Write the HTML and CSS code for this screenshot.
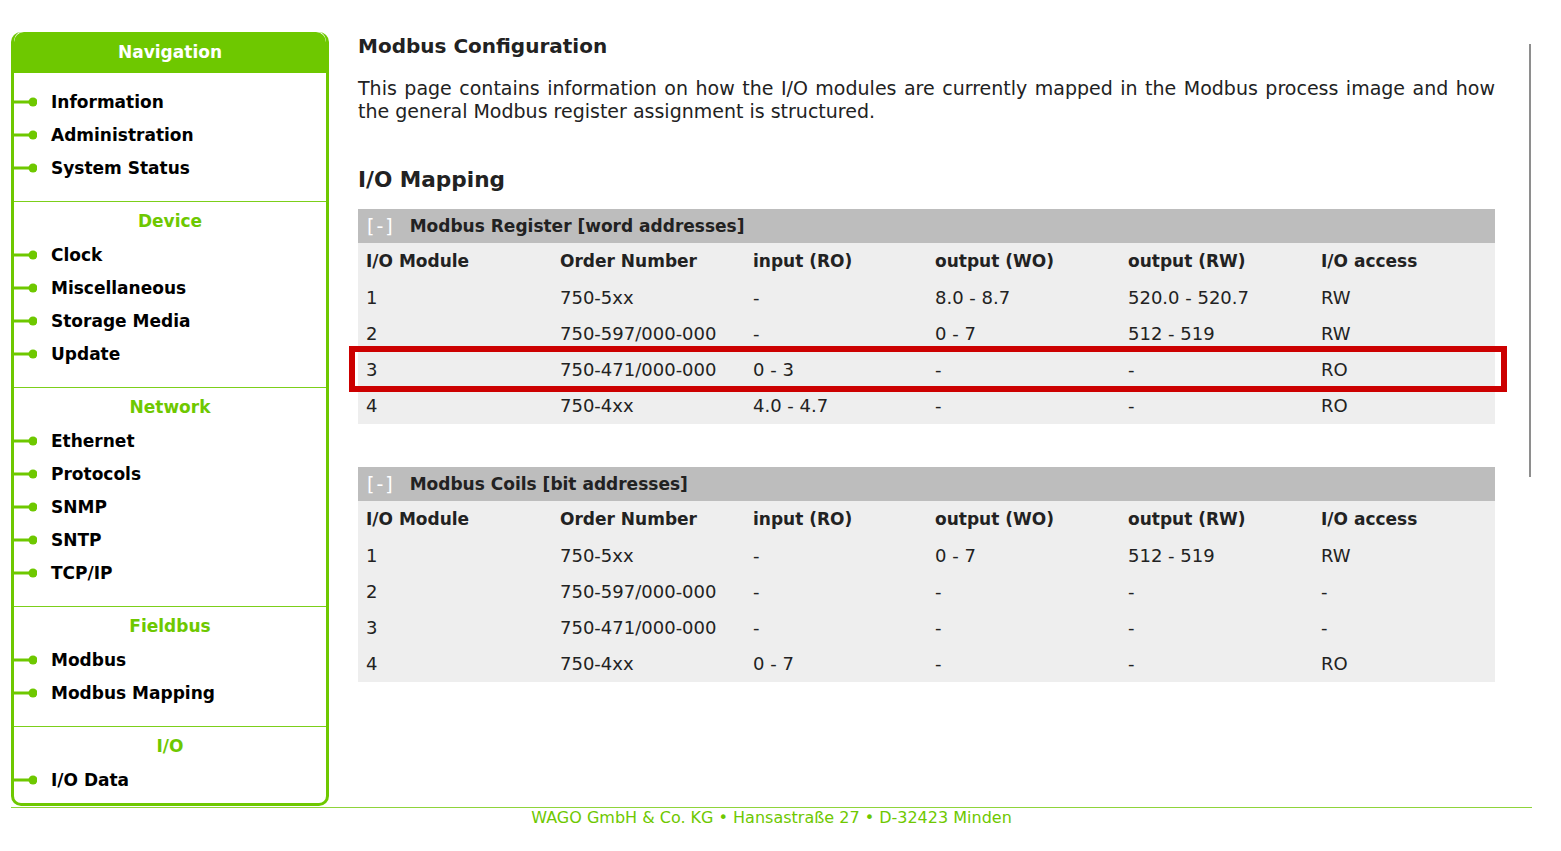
FILE: index.html
```html
<!DOCTYPE html>
<html lang="en">
<head>
<meta charset="utf-8">
<title>Modbus Configuration</title>
<link rel="stylesheet" href="styles.css">
</head>
<body>
<div class="page">
  <nav class="nav">
    <div class="nav-head">Navigation</div>
    <div class="nav-sec nav-first">
      <a class="nav-item"><svg class="bullet" width="23" height="10" viewBox="0 0 23 10"><line x1="0" y1="5" x2="19" y2="5"/><circle cx="19" cy="5" r="4.5"/></svg>Information</a>
      <a class="nav-item"><svg class="bullet" width="23" height="10" viewBox="0 0 23 10"><line x1="0" y1="5" x2="19" y2="5"/><circle cx="19" cy="5" r="4.5"/></svg>Administration</a>
      <a class="nav-item"><svg class="bullet" width="23" height="10" viewBox="0 0 23 10"><line x1="0" y1="5" x2="19" y2="5"/><circle cx="19" cy="5" r="4.5"/></svg>System Status</a>
    </div>
    <div class="nav-sec">
      <div class="nav-title">Device</div>
      <a class="nav-item"><svg class="bullet" width="23" height="10" viewBox="0 0 23 10"><line x1="0" y1="5" x2="19" y2="5"/><circle cx="19" cy="5" r="4.5"/></svg>Clock</a>
      <a class="nav-item"><svg class="bullet" width="23" height="10" viewBox="0 0 23 10"><line x1="0" y1="5" x2="19" y2="5"/><circle cx="19" cy="5" r="4.5"/></svg>Miscellaneous</a>
      <a class="nav-item"><svg class="bullet" width="23" height="10" viewBox="0 0 23 10"><line x1="0" y1="5" x2="19" y2="5"/><circle cx="19" cy="5" r="4.5"/></svg>Storage Media</a>
      <a class="nav-item"><svg class="bullet" width="23" height="10" viewBox="0 0 23 10"><line x1="0" y1="5" x2="19" y2="5"/><circle cx="19" cy="5" r="4.5"/></svg>Update</a>
    </div>
    <div class="nav-sec">
      <div class="nav-title">Network</div>
      <a class="nav-item"><svg class="bullet" width="23" height="10" viewBox="0 0 23 10"><line x1="0" y1="5" x2="19" y2="5"/><circle cx="19" cy="5" r="4.5"/></svg>Ethernet</a>
      <a class="nav-item"><svg class="bullet" width="23" height="10" viewBox="0 0 23 10"><line x1="0" y1="5" x2="19" y2="5"/><circle cx="19" cy="5" r="4.5"/></svg>Protocols</a>
      <a class="nav-item"><svg class="bullet" width="23" height="10" viewBox="0 0 23 10"><line x1="0" y1="5" x2="19" y2="5"/><circle cx="19" cy="5" r="4.5"/></svg>SNMP</a>
      <a class="nav-item"><svg class="bullet" width="23" height="10" viewBox="0 0 23 10"><line x1="0" y1="5" x2="19" y2="5"/><circle cx="19" cy="5" r="4.5"/></svg>SNTP</a>
      <a class="nav-item"><svg class="bullet" width="23" height="10" viewBox="0 0 23 10"><line x1="0" y1="5" x2="19" y2="5"/><circle cx="19" cy="5" r="4.5"/></svg>TCP/IP</a>
    </div>
    <div class="nav-sec">
      <div class="nav-title">Fieldbus</div>
      <a class="nav-item"><svg class="bullet" width="23" height="10" viewBox="0 0 23 10"><line x1="0" y1="5" x2="19" y2="5"/><circle cx="19" cy="5" r="4.5"/></svg>Modbus</a>
      <a class="nav-item"><svg class="bullet" width="23" height="10" viewBox="0 0 23 10"><line x1="0" y1="5" x2="19" y2="5"/><circle cx="19" cy="5" r="4.5"/></svg>Modbus Mapping</a>
    </div>
    <div class="nav-sec nav-last">
      <div class="nav-title">I/O</div>
      <a class="nav-item"><svg class="bullet" width="23" height="10" viewBox="0 0 23 10"><line x1="0" y1="5" x2="19" y2="5"/><circle cx="19" cy="5" r="4.5"/></svg>I/O Data</a>
    </div>
  </nav>

  <main class="main">
    <h1 class="title">Modbus Configuration</h1>
    <p class="intro">This page contains information on how the I/O modules are currently mapped in the Modbus process image and how the general Modbus register assignment is structured.</p>
    <h2 class="subtitle">I/O Mapping</h2>

    <div class="map">
      <div class="band"><span class="toggle">[-]</span><span class="band-title">Modbus Register [word addresses]</span></div>
      <table class="grid">
        <colgroup><col class="c1"><col class="c2"><col class="c3"><col class="c4"><col class="c5"><col class="c6"></colgroup>
        <tr><th>I/O Module</th><th>Order Number</th><th>input (RO)</th><th>output (WO)</th><th>output (RW)</th><th>I/O access</th></tr>
        <tr><td>1</td><td>750-5xx</td><td>-</td><td>8.0 - 8.7</td><td>520.0 - 520.7</td><td>RW</td></tr>
        <tr><td>2</td><td>750-597/000-000</td><td>-</td><td>0 - 7</td><td>512 - 519</td><td>RW</td></tr>
        <tr><td>3</td><td>750-471/000-000</td><td>0 - 3</td><td>-</td><td>-</td><td>RO</td></tr>
        <tr><td>4</td><td>750-4xx</td><td>4.0 - 4.7</td><td>-</td><td>-</td><td>RO</td></tr>
      </table>
      <div class="highlight"></div>
    </div>

    <div class="map map-second">
      <div class="band"><span class="toggle">[-]</span><span class="band-title">Modbus Coils [bit addresses]</span></div>
      <table class="grid">
        <colgroup><col class="c1"><col class="c2"><col class="c3"><col class="c4"><col class="c5"><col class="c6"></colgroup>
        <tr><th>I/O Module</th><th>Order Number</th><th>input (RO)</th><th>output (WO)</th><th>output (RW)</th><th>I/O access</th></tr>
        <tr><td>1</td><td>750-5xx</td><td>-</td><td>0 - 7</td><td>512 - 519</td><td>RW</td></tr>
        <tr><td>2</td><td>750-597/000-000</td><td>-</td><td>-</td><td>-</td><td>-</td></tr>
        <tr><td>3</td><td>750-471/000-000</td><td>-</td><td>-</td><td>-</td><td>-</td></tr>
        <tr><td>4</td><td>750-4xx</td><td>0 - 7</td><td>-</td><td>-</td><td>RO</td></tr>
      </table>
    </div>
  </main>
</div>
<footer class="footer">WAGO GmbH &amp; Co. KG • Hansastraße 27 • D-32423 Minden</footer>
<div class="scrollbar"></div>
</body>
</html>
```

FILE: styles.css
```css
* { box-sizing: border-box; }

body {
  margin: 0;
  background: #ffffff;
  font-family: "DejaVu Sans", Verdana, sans-serif;
  color: #222222;
}

.page {
  display: flex;
  align-items: flex-start;
  width: 1521px;
  margin: 32px 0 0 11px;
  padding-bottom: 1px;
  border-bottom: 1px solid #8fd43a;
}

/* ---------- navigation ---------- */
.nav {
  flex: 0 0 318px;
  width: 318px;
  border: 3px solid #6ec800;
  border-top: none;
  border-radius: 10px;
  overflow: hidden;
  background: #ffffff;
}

.nav-head {
  background: #6ec800;
  color: #ffffff;
  font-weight: bold;
  font-size: 17px;
  text-align: center;
  height: 41px;
  line-height: 33px;
  padding-top: 4px;
  border-radius: 10px 10px 0 0;
}

.nav-sec {
  padding: 2px 0 18px 0;
  border-top: 1px solid #7ccf1a;
}

.nav-first {
  border-top: none;
  padding-top: 11px;
  padding-bottom: 18px;
}

.nav-last {
  padding-bottom: 8px;
}

.nav-title {
  color: #6ec800;
  font-weight: bold;
  font-size: 17px;
  height: 33px;
  line-height: 31px;
  padding-top: 2px;
  text-align: center;
}

.nav-item {
  display: flex;
  align-items: center;
  height: 33px;
  padding-top: 2px;
  font-size: 17px;
  font-weight: bold;
  color: #000000;
  text-decoration: none;
}

.bullet {
  flex: 0 0 23px;
  margin: 1px 14px 0 0;
}

.bullet line {
  stroke: #6ec800;
  stroke-width: 3;
}

.bullet circle {
  fill: #6ec800;
}

/* ---------- main ---------- */
.main {
  flex: 0 0 1137px;
  width: 1137px;
  margin-left: 29px;
}

.title {
  margin: 2px 0 0 0;
  font-size: 20px;
  line-height: 24px;
  font-weight: bold;
  color: #222222;
}

.intro {
  margin: 19px 0 0 0;
  font-size: 19px;
  line-height: 23px;
  text-align: justify;
  color: #222222;
}

.subtitle {
  margin: 44px 0 0 0;
  font-size: 21.6px;
  line-height: 26px;
  font-weight: bold;
  color: #222222;
}

.map {
  position: relative;
  margin-top: 16px;
  background: #eeeeee;
  padding-bottom: 1px;
}

.map-second {
  margin-top: 43px;
}

.band {
  display: flex;
  align-items: center;
  height: 34px;
  background: #bdbdbd;
  padding-left: 9px;
}

.toggle {
  color: #ffffff;
  font-size: 19px;
  letter-spacing: 2px;
  margin-right: 15px;
}

.band-title {
  font-size: 17px;
  font-weight: bold;
  color: #222222;
}

.grid {
  width: 1137px;
  border-collapse: collapse;
  table-layout: fixed;
}

.c1 { width: 194px; }
.c2 { width: 193px; }
.c3 { width: 182px; }
.c4 { width: 193px; }
.c5 { width: 193px; }
.c6 { width: 182px; }

.grid th,
.grid td {
  height: 36px;
  padding: 0 8px;
  text-align: left;
  vertical-align: middle;
  white-space: nowrap;
  color: #222222;
}

.grid th {
  font-size: 17px;
  font-weight: bold;
}

.grid td {
  font-size: 18px;
}

.highlight {
  position: absolute;
  left: -9px;
  top: 137px;
  width: 1158px;
  height: 46px;
  border: 6px solid #cc0000;
}

/* ---------- footer ---------- */
.footer {
  width: 1521px;
  margin-left: 11px;
  text-align: center;
  font-size: 16px;
  line-height: 20px;
  color: #6ec800;
}

.scrollbar {
  position: absolute;
  left: 1529px;
  top: 44px;
  width: 2px;
  height: 433px;
  background: #8e8e8e;
}
```
